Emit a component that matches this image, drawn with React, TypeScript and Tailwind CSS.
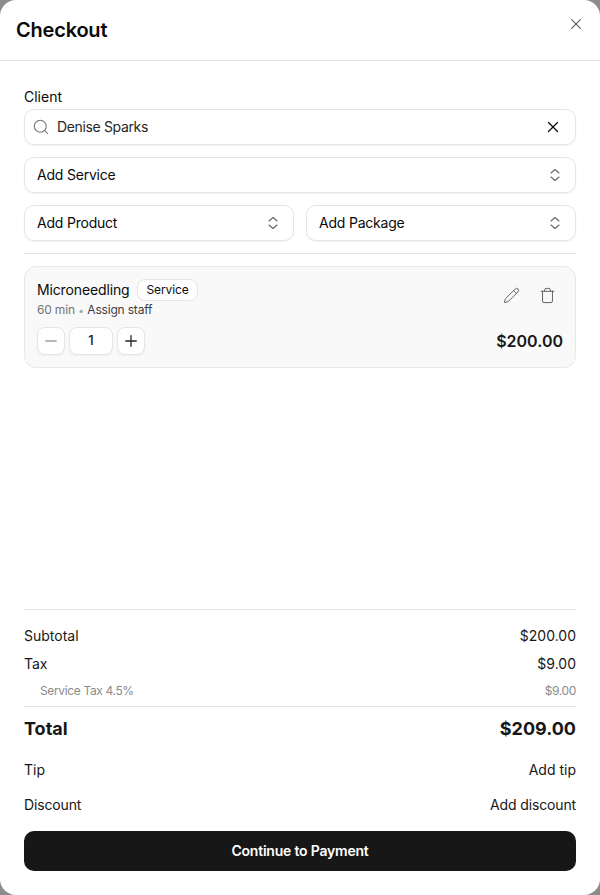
import { Minus, Pencil, Plus, Search, Trash, X } from "lucide-react";

function UpDown() {
  return (
    <svg viewBox="0 0 10 14" className="h-[14px] w-[10px] text-[#666]" fill="none" stroke="currentColor" strokeWidth="1.1" strokeLinecap="round" strokeLinejoin="round">
      <path d="M1 5l4-3.5L9 5" />
      <path d="M1 9l4 3.5L9 9" />
    </svg>
  );
}

function SelectBox({ label, className = "" }: { label: string; className?: string }) {
  return (
    <div className={`flex h-9 items-center justify-between rounded-[10px] border border-[#e5e5e5] bg-white pl-3 pr-[15px] shadow-[0_1px_2px_rgba(0,0,0,0.05)] ${className}`}>
      <span className="text-sm font-normal tracking-[-0.015em] text-[#0a0a0a]">{label}</span>
      <UpDown />
    </div>
  );
}

function Row({ left, right, className = "" }: { left: string; right: string; className?: string }) {
  return (
    <div className={`flex items-center justify-between ${className}`}>
      <span>{left}</span>
      <span>{right}</span>
    </div>
  );
}

export default function App() {
  return (
    <div className="h-[895px] w-[600px] overflow-hidden bg-[#8c8c8c] font-['Inter',sans-serif] text-[#171717]">
      <div className="flex h-full flex-col rounded-2xl bg-white">
        <header className="relative flex h-[61px] items-center border-b border-[#e5e5e5] px-4">
          <h1 className="text-xl font-semibold tracking-[-0.01em] text-[#0a0a0a]">Checkout</h1>
          <button className="absolute right-[15px] top-[15px] text-[#404040]">
            <X className="h-[18px] w-[18px]" strokeWidth={1.4} />
          </button>
        </header>

        <main className="flex flex-1 flex-col px-6 pt-[28px]">
          <label className="text-sm font-normal leading-4 text-[#0a0a0a]">Client</label>
          <div className="mt-1 flex h-9 items-center rounded-[10px] border border-[#e5e5e5] bg-white pl-[7px] pr-[13px] shadow-[0_1px_2px_rgba(0,0,0,0.05)]">
            <Search className="h-[18px] w-[18px] text-[#737373]" strokeWidth={1.4} />
            <span className="ml-[7px] flex-1 text-sm tracking-tight text-[#262626]">Denise Sparks</span>
            <X className="h-[18px] w-[18px] text-[#0a0a0a]" strokeWidth={1.75} />
          </div>
          <SelectBox label="Add Service" className="mt-3" />
          <div className="mt-3 flex gap-3">
            <SelectBox label="Add Product" className="flex-1" />
            <SelectBox label="Add Package" className="flex-1" />
          </div>
          <div className="mt-3 border-t border-[#e5e5e5]" />

          <div className="mt-3 flex h-[102px] flex-col justify-between rounded-xl border border-[#e8e8e8] bg-[#f9f9f9] p-3">
            <div className="flex items-start justify-between">
              <div>
                <div className="flex items-center gap-2">
                  <span className="text-sm font-normal tracking-[-0.01em] text-[#0a0a0a]">Microneedling</span>
                  <span className="rounded-lg border border-[#e5e5e5] bg-white px-2 py-0.5 text-xs font-normal tracking-[-0.01em] text-[#0a0a0a]">Service</span>
                </div>
                <div className="mt-px flex items-center gap-[3.5px] text-xs leading-4 tracking-[-0.015em]">
                  <span className="text-[#737373]">60 min</span>
                  <span className="text-[10px] text-[#a3a3a3]">•</span>
                  <span className="text-[#404040]">Assign staff</span>
                </div>
              </div>
              <div className="mr-[7px] mt-2 flex items-center gap-[19px] text-[#525252]">
                <Pencil className="h-[17px] w-[17px]" strokeWidth={1.25} />
                <Trash className="h-[17px] w-[17px]" strokeWidth={1.25} />
              </div>
            </div>
            <div className="flex items-center justify-between">
              <div className="flex items-center gap-1">
                <div className="flex h-7 w-7 items-center justify-center rounded-lg border border-[#e5e5e5] bg-white text-[#737373] shadow-[0_1px_2px_rgba(0,0,0,0.05)]">
                  <Minus className="h-[18px] w-[18px]" strokeWidth={1.5} />
                </div>
                <div className="flex h-7 w-11 items-center justify-center rounded-lg border border-[#e5e5e5] bg-white text-[13px] font-medium shadow-[0_1px_2px_rgba(0,0,0,0.05)]">1</div>
                <div className="flex h-7 w-7 items-center justify-center rounded-lg border border-[#e5e5e5] bg-white text-[#262626] shadow-[0_1px_2px_rgba(0,0,0,0.05)]">
                  <Plus className="h-[18px] w-[18px]" strokeWidth={1.75} />
                </div>
              </div>
              <span className="text-base font-semibold">$200.00</span>
            </div>
          </div>

          <div className="flex-1" />

          <div className="border-t border-[#e5e5e5] pt-4 text-sm">
            <Row left="Subtotal" right="$200.00" className="h-5" />
            <Row left="Tax" right="$9.00" className="mt-2 h-5" />
            <Row left="Service Tax 4.5%" right="$9.00" className="mt-[9px] h-4 pl-4 text-xs tracking-[-0.03em] text-[#8a8a8a]" />
          </div>
          <div className="mt-[7px] border-t border-[#e5e5e5]" />
          <Row left="Total" right="$209.00" className="mt-2 h-7 text-lg font-bold" />
          <Row left="Tip" right="Add tip" className="mt-[17px] h-5 text-sm" />
          <Row left="Discount" right="Add discount" className="mt-[15px] h-5 text-sm tracking-[-0.01em]" />
          <button className="mb-6 mt-4 h-10 rounded-[10px] bg-[#171717] text-sm font-semibold tracking-[-0.015em] text-white">Continue to Payment</button>
        </main>
      </div>
    </div>
  );
}
